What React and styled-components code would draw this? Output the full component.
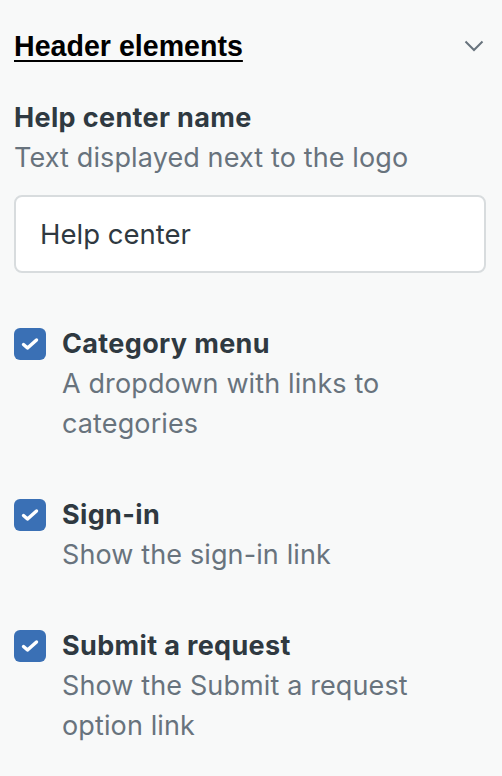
import React from "react";
import styled, { createGlobalStyle } from "styled-components";

const Global = createGlobalStyle`
  html, body { margin: 0; padding: 0; background: #f8f9f9; }
  body { font-family: Inter, "Noto Sans", sans-serif; -webkit-font-smoothing: antialiased; }
  * { box-sizing: border-box; }
`;

const Panel = styled.div`
  width: 502px;
  min-height: 776px;
  background: #f8f9f9;
  padding: 26px 16px 30px 14px;
  display: flex;
  flex-direction: column;
`;

const SectionHeader = styled.div`
  display: flex;
  align-items: center;
  justify-content: space-between;
  height: 40px;
  margin-bottom: 32px;
`;

const Heading = styled.h2`
  margin: 0;
  font-family: "Liberation Sans", Arial, sans-serif;
  font-weight: 700;
  font-size: 28.6px;
  line-height: 40px;
  color: #000;
  text-decoration: underline;
  text-decoration-thickness: 2px;
  text-underline-offset: 4px;
`;

const Chevron = styled.svg`
  width: 20px;
  height: 12px;
  margin-right: 2px;
`;

const Field = styled.div`
  display: flex;
  flex-direction: column;
`;

const Label = styled.div`
  font-size: 27px;
  font-weight: 700;
  line-height: 40px;
  color: #2f3941;
  letter-spacing: 0.35px;
`;

const Hint = styled.div`
  font-size: 27px;
  font-weight: 400;
  line-height: 40px;
  color: #68737d;
  letter-spacing: 0.12px;
`;

const Input = styled.input`
  margin-top: 17px;
  width: 472px;
  height: 78px;
  border: 2px solid #d8dcde;
  border-radius: 8px;
  background: #fff;
  padding: 0 24px;
  font-family: Inter, "Noto Sans", sans-serif;
  font-size: 27.5px;
  color: #2f3941;
  outline: none;
`;

const Options = styled.div`
  display: flex;
  flex-direction: column;
  gap: 51px;
  margin-top: 51px;
`;

const Option = styled.label`
  display: flex;
  gap: 16px;
  align-items: flex-start;
`;

const Box = styled.span`
  flex: none;
  width: 32px;
  height: 32px;
  margin-top: 4px;
  border-radius: 6px;
  background: #3a70b5;
  display: flex;
  align-items: center;
  justify-content: center;
`;

const OptionText = styled.div`
  display: flex;
  flex-direction: column;
  max-width: 370px;
`;

function Check() {
  return (
    <Box>
      <svg width="18" height="14" viewBox="0 0 18 14" fill="none">
        <path d="M2.5 7.5L6.5 11L15.5 3" stroke="#fff" strokeWidth="3.4" strokeLinecap="round" strokeLinejoin="round" />
      </svg>
    </Box>
  );
}

const options = [
  { label: "Category menu", hint: "A dropdown with links to categories" },
  { label: "Sign-in", hint: "Show the sign-in link" },
  { label: "Submit a request", hint: "Show the Submit a request option link" },
];

export default function App() {
  return (
    <>
      <Global />
      <Panel>
        <SectionHeader>
          <Heading>Header elements</Heading>
          <Chevron viewBox="0 0 20 12" fill="none">
            <path d="M1.5 1.5L10 10L18.5 1.5" stroke="#68737d" strokeWidth="2" />
          </Chevron>
        </SectionHeader>
        <Field>
          <Label>Help center name</Label>
          <Hint>Text displayed next to the logo</Hint>
          <Input defaultValue="Help center" />
        </Field>
        <Options>
          {options.map((o) => (
            <Option key={o.label}>
              <Check />
              <OptionText>
                <Label>{o.label}</Label>
                <Hint>{o.hint}</Hint>
              </OptionText>
            </Option>
          ))}
        </Options>
      </Panel>
    </>
  );
}
